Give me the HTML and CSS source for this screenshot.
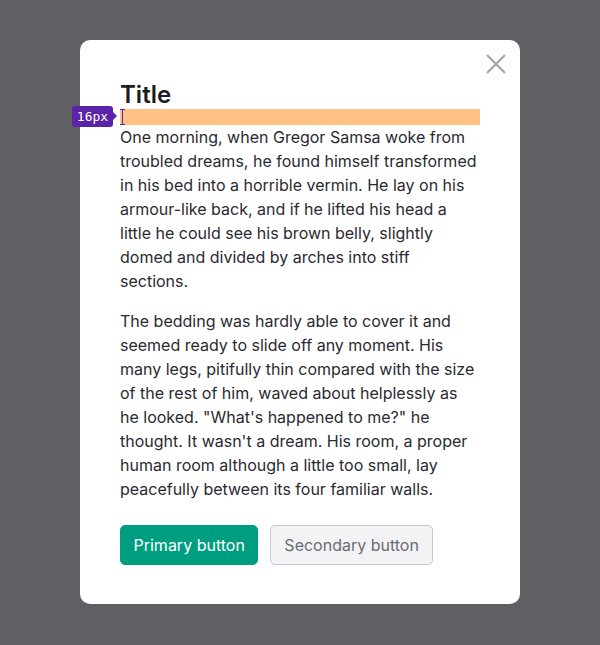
FILE: index.html
```html
<!DOCTYPE html>
<html>
<head>
<meta charset="utf-8">
<link rel="stylesheet" href="styles.css">
</head>
<body>
<div class="overlay">
  <div class="modal">
    <button class="close" aria-label="Close">
      <svg width="20" height="20" viewBox="0 0 20 20"><path d="M1 1L19 19M19 1L1 19" stroke="#a1a1a6" stroke-width="2" fill="none"/></svg>
    </button>
    <h1 class="title">Title</h1>
    <div class="spacer">
      <span class="badge">16px</span>
      <span class="bracket"></span>
    </div>
    <p class="text">One morning, when Gregor Samsa woke from troubled dreams, he found himself transformed in his bed into a horrible vermin. He lay on his armour-like back, and if he lifted his head a little he could see his brown belly, slightly domed and divided by arches into stiff sections.</p>
    <p class="text">The bedding was hardly able to cover it and seemed ready to slide off any moment. His many legs, pitifully thin compared with the size of the rest of him, waved about helplessly as he looked. "What's happened to me?" he thought. It wasn't a dream. His room, a proper human room although a little too small, lay peacefully between its four familiar walls.</p>
    <div class="actions">
      <button class="btn btn-primary">Primary button</button>
      <button class="btn btn-secondary">Secondary button</button>
    </div>
  </div>
</div>
</body>
</html>
```

FILE: styles.css
```css
html, body {
  margin: 0;
  padding: 0;
}
body {
  background: #606064;
  font-family: Inter, "Noto Sans", sans-serif;
  width: 600px;
  height: 645px;
}
.overlay {
  display: flex;
  justify-content: center;
  padding-top: 40px;
}
.modal {
  position: relative;
  width: 360px;
  padding: 40px 40px 39px;
  background: #ffffff;
  border-radius: 10px;
}
.close {
  position: absolute;
  right: 14px;
  top: 14px;
  width: 20px;
  height: 20px;
  padding: 0;
  border: 0;
  background: none;
  display: block;
}
.close svg { display: block; }
.title {
  margin: 0;
  font-size: 24px;
  line-height: 28px;
  padding-top: 1px;
  font-weight: 600;
  color: #1c1c21;
}
.spacer {
  position: relative;
  height: 16px;
  background: #fec186;
}
.badge {
  position: absolute;
  left: -48px;
  top: -3px;
  height: 21px;
  width: 41px;
  box-sizing: border-box;
  background: #5b23a8;
  color: #ffffff;
  border-radius: 3px;
  font-family: "DejaVu Sans Mono", monospace;
  font-size: 13px;
  line-height: 21px;
  text-align: center;
}
.badge::after {
  content: "";
  position: absolute;
  right: -4px;
  top: 6px;
  border-left: 4px solid #5b23a8;
  border-top: 4px solid transparent;
  border-bottom: 4px solid transparent;
}
.bracket {
  position: absolute;
  left: 0;
  top: 0;
  width: 5px;
  height: 16px;
  border-top: 1px solid #5b23a8;
  border-bottom: 1px solid #5b23a8;
  box-sizing: border-box;
}
.bracket::after {
  content: "";
  position: absolute;
  left: 2px;
  top: 0;
  width: 1px;
  height: 100%;
  background: #5b23a8;
}
.text {
  margin: 0 0 16px;
  font-size: 16px;
  line-height: 24px;
  color: #2a2a30;
}
.text:last-of-type {
  margin-bottom: 0;
}
.actions {
  display: flex;
  gap: 12px;
  margin-top: 24px;
}
.btn {
  font-family: Inter, "Noto Sans", sans-serif;
  font-size: 16px;
  height: 40px;
  padding: 0 12.5px;
  border-radius: 5px;
  box-sizing: border-box;
}
.btn-primary {
  background: #009e80;
  color: #ffffff;
  border: 1px solid #009e80;
}
.btn-secondary {
  padding: 0 13px;
  background: #f3f3f5;
  color: #6b6b73;
  border: 1px solid #c8c8d0;
}
```
